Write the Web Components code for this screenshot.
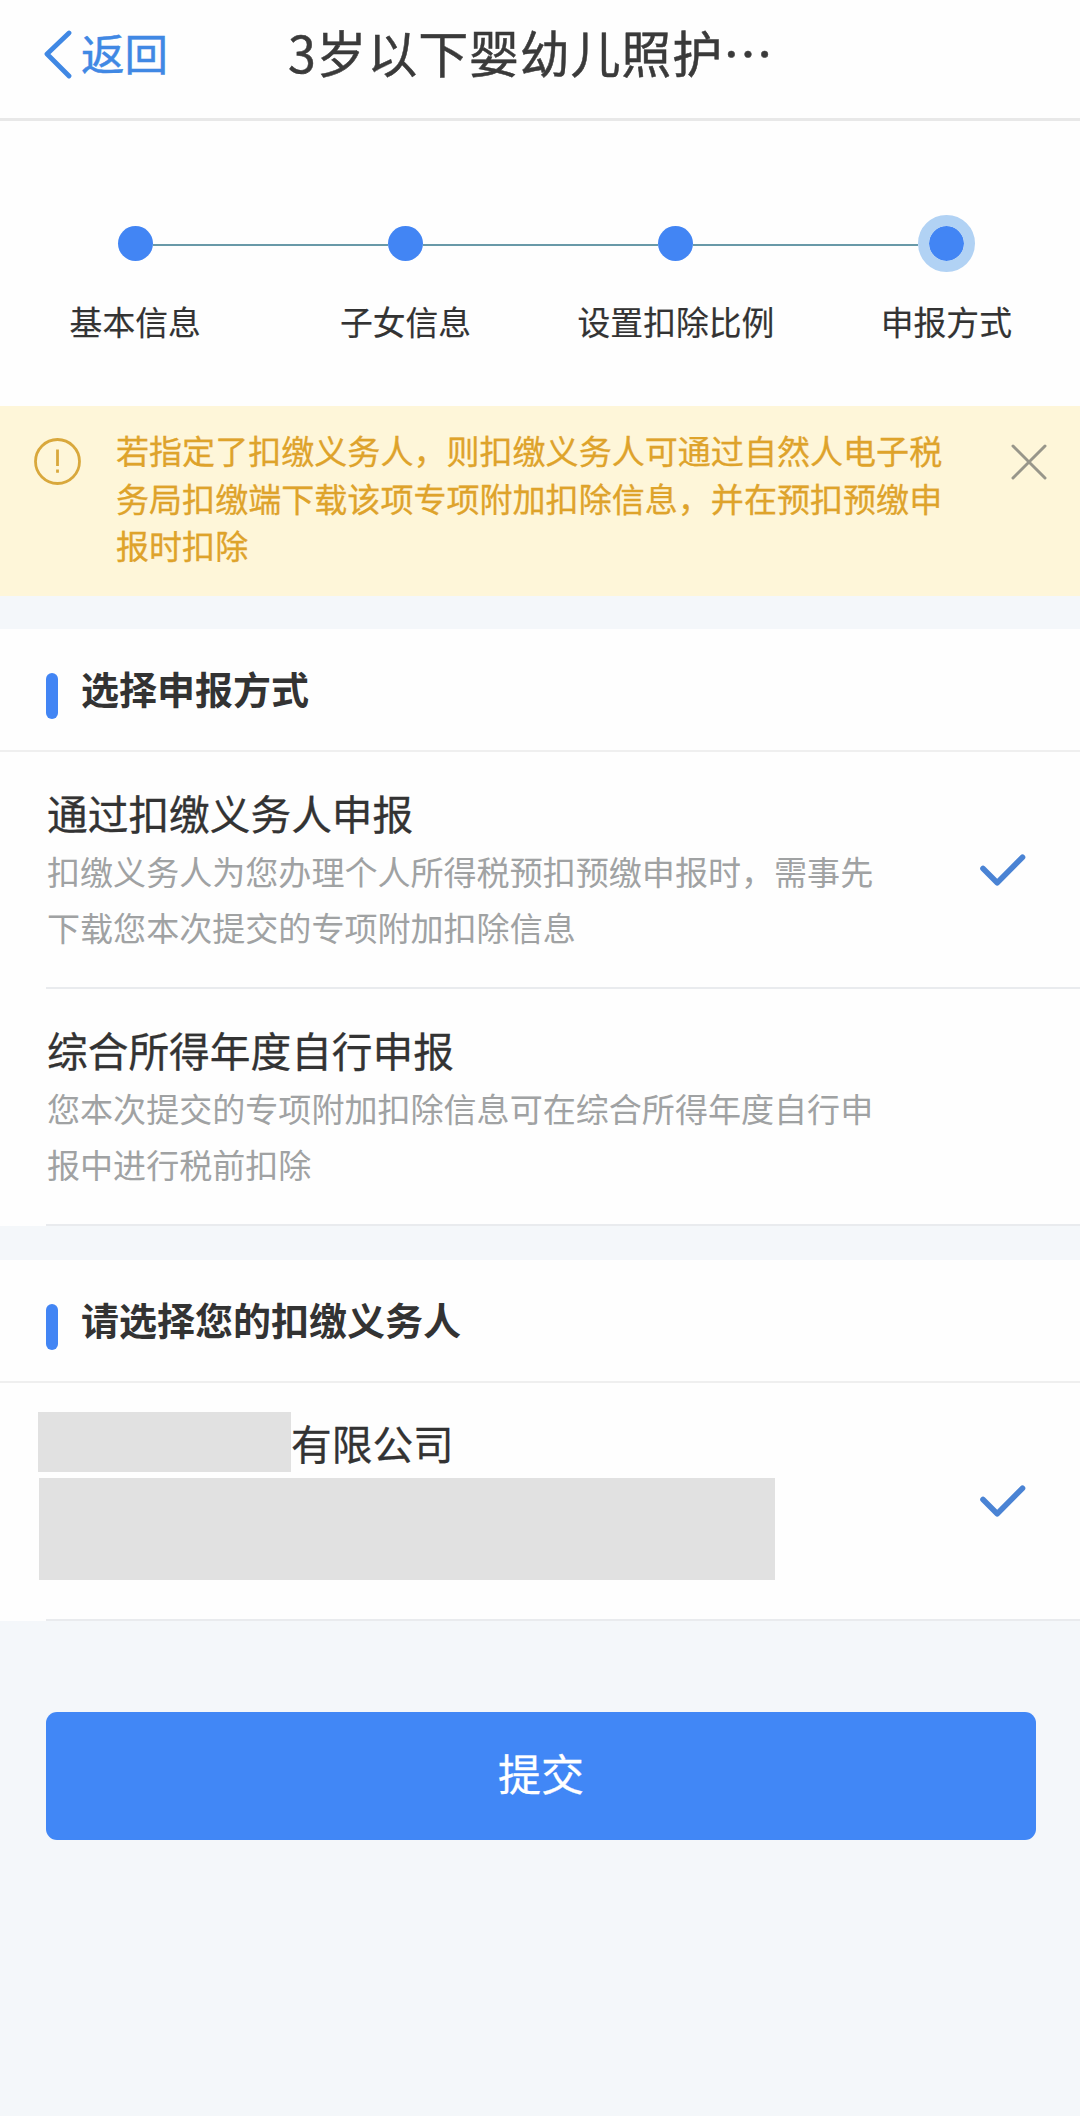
<!DOCTYPE html>
<html lang="zh-CN">
<head>
<meta charset="utf-8">
<title>3岁以下婴幼儿照护</title>
<style>
  html, body { margin: 0; padding: 0; }
  body {
    background: #f4f7fa;
    color: #333;
    font-family: "Noto Sans CJK SC", "Liberation Sans", sans-serif;
  }
</style>
</head>
<body>
<tax-page>
  <nav-header back="返回">3岁以下婴幼儿照护…</nav-header>
  <step-bar>
    <step-item class="first">基本信息</step-item>
    <step-item>子女信息</step-item>
    <step-item>设置扣除比例</step-item>
    <step-item current>申报方式</step-item>
  </step-bar>
  <notice-bar>若指定了扣缴义务人，则扣缴义务人可通过自然人电子税务局扣缴端下载该项专项附加扣除信息，并在预扣预缴申报时扣除</notice-bar>
  <option-section heading="选择申报方式">
    <option-row checked>
      <span slot="title">通过扣缴义务人申报</span>
      扣缴义务人为您办理个人所得税预扣预缴申报时，需事先下载您本次提交的专项附加扣除信息
    </option-row>
    <option-row>
      <span slot="title">综合所得年度自行申报</span>
      您本次提交的专项附加扣除信息可在综合所得年度自行申报中进行税前扣除
    </option-row>
  </option-section>
  <option-section heading="请选择您的扣缴义务人">
    <company-row>有限公司</company-row>
  </option-section>
  <submit-button>提交</submit-button>
</tax-page>

<script>
  function define(name, render) {
    customElements.define(name, class extends HTMLElement {
      connectedCallback() {
        if (this.shadowRoot) return;
        const t = document.createElement('template');
        t.innerHTML = render(this);
        this.attachShadow({ mode: 'open' }).appendChild(t.content.cloneNode(true));
      }
    });
  }

  define('tax-page', () => `
    <style>
      :host { display: flex; flex-direction: column; width: 1080px; min-height: 2116px; background: #f4f7fa; }
    </style>
    <slot></slot>`);

  define('nav-header', el => `
    <style>
      :host { display: flex; box-sizing: border-box; height: 121px; padding-top: 16px; background: #fefefe; border-bottom: 3px solid #e8e8e8; }
      .back { display: flex; box-sizing: border-box; width: 288px; padding-left: 42px; color: #4088e4; font-size: 43.5px; line-height: 73px; -webkit-text-stroke: .5px; }
      svg { display: block; width: 30px; height: 50px; margin: 13px 9px 0 0; }
      .title { color: #3a3a3a; font-size: 50px; line-height: 70px; letter-spacing: .8px; white-space: nowrap; -webkit-text-stroke: .5px; }
    </style>
    <div class="back">
      <svg viewBox="0 0 30 50" fill="none" stroke="currentColor" stroke-width="4.8" stroke-linecap="round" stroke-linejoin="round"><path d="M27 4 5 25 27 47"/></svg>
      <span>${el.getAttribute('back')}</span>
    </div>
    <div class="title"><slot></slot></div>`);

  define('step-bar', () => `
    <style>
      :host { display: flex; box-sizing: border-box; height: 285px; padding-top: 94px; background: #fefefe; }
    </style>
    <slot></slot>`);

  define('step-item', () => `
    <style>
      :host { display: flex; flex-direction: column; flex: 0 0 270.4px; }
      .track { display: flex; align-items: center; height: 57px; }
      .line { flex: 1; height: 2px; margin-top: 3px; background: #6899a8; }
      :host(.first) .line:first-child, :host([current]) .line:last-child { visibility: hidden; }
      .dot { width: 35px; height: 35px; border-radius: 50%; background: #4285f4; }
      :host([current]) .dot { border: 11px solid #b1d2f4; background-clip: padding-box; }
      .label { margin-top: 28px; text-align: center; font-size: 32.8px; line-height: 41px; white-space: nowrap; color: #333; -webkit-text-stroke: .2px; }
    </style>
    <div class="track"><i class="line"></i><i class="dot"></i><i class="line"></i></div>
    <div class="label"><slot></slot></div>`);

  define('notice-bar', () => `
    <style>
      :host { display: flex; align-items: flex-start; box-sizing: border-box; height: 190px; padding: 21px 32px 0 33px; margin-bottom: 33px; background: #fef6d9; color: #dea32b; }
      .info { width: 49px; height: 49px; margin: 10px 34px 0 0; flex: none; }
      .text { width: 830px; font-size: 33.05px; line-height: 47.7px; -webkit-text-stroke: .3px; }
      .close { width: 38px; height: 38px; margin: 16px 0 0 auto; flex: none; }
    </style>
    <svg class="info" viewBox="0 0 49 49" fill="none" stroke="#d9a83c" stroke-width="2.8"><circle cx="24.5" cy="24.5" r="22"/><path d="M24.5 12.5v16.5M24.5 32.5v3.2"/></svg>
    <div class="text"><slot></slot></div>
    <svg class="close" viewBox="0 0 38 38" fill="none" stroke="#98968a" stroke-width="3" stroke-linecap="round"><path d="M3 3 35 35M35 3 3 35"/></svg>`);

  define('option-section', el => `
    <style>
      :host { display: block; background: #fefefe; margin-bottom: 34px; }
      .head { display: flex; align-items: flex-start; box-sizing: border-box; height: 123px; padding: 0 46px; border-bottom: 2px solid #efefef; }
      .bar { width: 12px; height: 46px; margin-top: 44px; border-radius: 6px; background: #4285f4; }
      h2 { margin: 34px 0 0 23px; font-size: 38px; line-height: 50px; font-weight: 700; color: #333; }
    </style>
    <div class="head"><i class="bar"></i><h2>${el.getAttribute('heading')}</h2></div>
    <slot></slot>`);

  const CHECK = `<svg class="check" viewBox="0 0 48 34" fill="none" stroke="#4a83d4" stroke-width="5.6" stroke-linecap="round" stroke-linejoin="round"><path d="M4 15.5 18.2 29.7 43.5 4.2"/></svg>`;

  define('option-row', el => `
    <style>
      :host { display: flex; align-items: flex-start; box-sizing: border-box; height: 237px; margin-left: 46px; padding: 32px 53px 0 1px; border-bottom: 2px solid #e9ebee; }
      .copy { width: 828px; }
      .title { font-size: 40.7px; line-height: 57px; color: #333; -webkit-text-stroke: .3px; }
      .desc { font-size: 33.05px; line-height: 56px; color: #a0a2a3; margin-top: 2px; }
      .check { width: 48px; height: 34px; margin: 69px 0 0 auto; }
    </style>
    <div class="copy">
      <div class="title"><slot name="title"></slot></div>
      <div class="desc"><slot></slot></div>
    </div>
    ${el.hasAttribute('checked') ? CHECK : ''}`);

  define('company-row', () => `
    <style>
      :host { display: flex; align-items: flex-start; box-sizing: border-box; height: 238px; padding: 29px 53px 0 38px;
        background: linear-gradient(#e9ebee, #e9ebee) 46px 100% / 100% 2px no-repeat; }
      .name { display: flex; height: 60px; font-size: 40.7px; line-height: 62px; color: #333; -webkit-text-stroke: .3px; }
      .mask { background: #e1e1e1; }
      .short { width: 253px; height: 60px; }
      .long { width: 736px; height: 102px; margin: 6px 0 0 1px; }
      .check { width: 48px; height: 34px; margin: 72px 0 0 auto; }
    </style>
    <div>
      <div class="name"><i class="mask short"></i><slot></slot></div>
      <div class="mask long"></div>
    </div>
    ${CHECK}`);

  define('submit-button', () => `
    <style>
      :host { display: block; margin: 57px 44px 0 46px; }
      button { display: block; width: 100%; height: 128px; padding: 0 0 8px; border: 0; border-radius: 11px; background: #4187f6; color: #fff; font-family: inherit; font-size: 43px; line-height: 60px; -webkit-text-stroke: .3px; }
    </style>
    <button type="button"><slot></slot></button>`);
</script>
</body>
</html>
